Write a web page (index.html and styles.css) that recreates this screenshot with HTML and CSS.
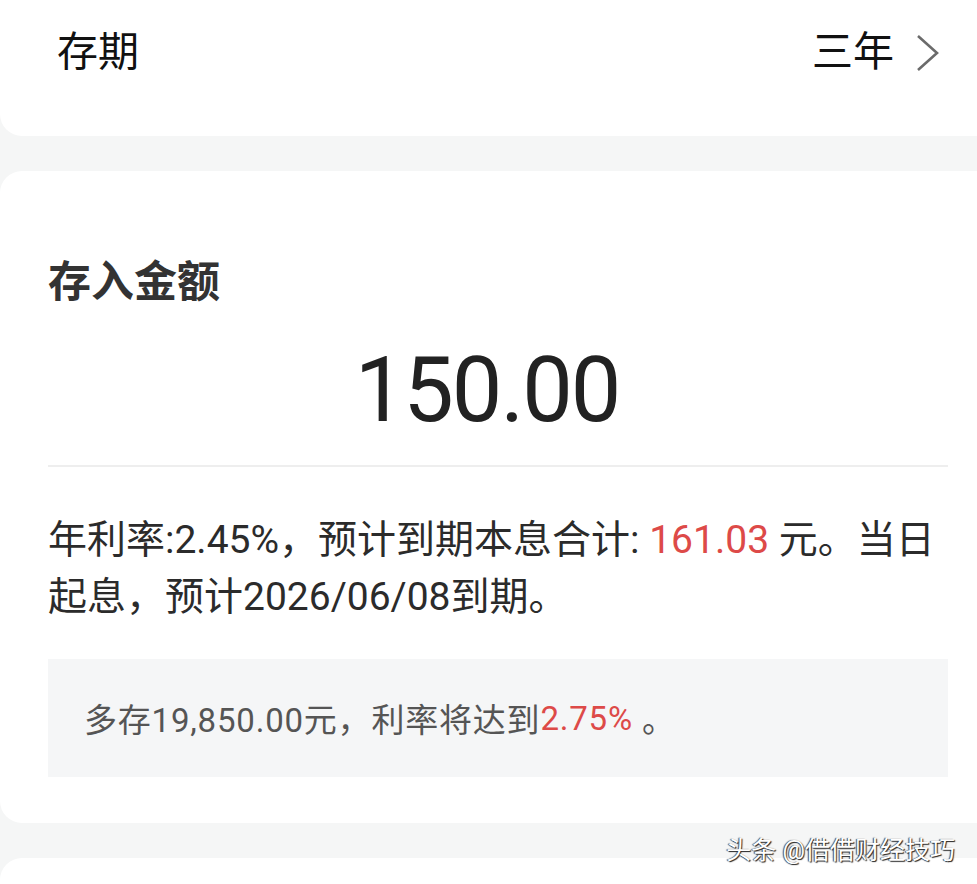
FILE: index.html
```html
<!DOCTYPE html>
<html lang="zh-CN">
<head>
  <meta charset="UTF-8" />
  <meta name="viewport" content="width=device-width, initial-scale=1.0" />
  <title>存款</title>
  <link rel="stylesheet" href="styles.css">
</head>
<body>
  <div class="card term">
    <span class="term-label">存期</span>
    <span class="term-value">三年
      <svg class="chevron" width="24" height="38" viewBox="0 0 24 38"><path d="M2 2 L21 19 L2 36" fill="none" stroke="#6b6b6b" stroke-width="2.6"/></svg>
    </span>
  </div>

  <div class="card amount">
    <h3 class="amount-title">存入金额</h3>
    <div class="amount-value">150.00</div>
    <div class="divider"></div>
    <p class="summary">年利率:2.45%，预计到期本息合计: <span class="red">161.03</span> 元。当日起息，预计2026/06/08到期。</p>
    <div class="tip">多存19,850.00元，利率将达到<span class="red">2.75%</span>&nbsp;。</div>
  </div>

  <div class="card next"></div>

  <div class="watermark">头条 @借借财经技巧</div>
</body>
</html>
```

FILE: styles.css
```css
body {
  margin: 0;
  background: #f5f6f6;
  font-family: Roboto, "Noto Sans CJK SC", sans-serif;
  color: #333;
  overflow: hidden;
  height: 884px;
  position: relative;
}
.card {
  background: #fff;
  border-radius: 22px 0 0 22px;
}
.term {
  height: 136px;
  box-sizing: border-box;
  padding: 22px 37px 0 57px;
  display: flex;
  justify-content: space-between;
  align-items: flex-start;
  border-radius: 0 0 0 22px;
  color: #111;
  font-size: 41px;
  line-height: 60px;
}
.term-value {
  display: flex;
  align-items: center;
  gap: 22px;
}
.chevron {
  margin-top: 2px;
}
.amount {
  margin-top: 35px;
  padding: 81px 29px 46px 48px;
}
.amount-title {
  margin: 0;
  font-size: 43px;
  line-height: 60px;
  font-weight: bold;
  color: #333;
}
.amount-value {
  margin-top: 29px;
  text-align: center;
  font-size: 90px;
  line-height: 100px;
  color: #222;
  letter-spacing: -2px;
  padding-right: 22px;
}
.divider {
  margin-top: 24px;
  height: 2px;
  background: #eeeeee;
}
.summary {
  margin: 45px 0 0;
  font-size: 39px;
  line-height: 57px;
  color: #2b2b2b;
}
.red {
  color: #dd4a48;
}
.tip {
  margin-top: 33px;
  height: 118px;
  box-sizing: border-box;
  padding-left: 36px;
  display: flex;
  align-items: center;
  background: #f5f6f7;
  font-size: 33px;
  letter-spacing: 0.8px;
  color: #555;
}
.next {
  margin-top: 35px;
  height: 26px;
  border-radius: 22px 0 0 0;
}
.watermark {
  position: absolute;
  right: 22px;
  top: 830px;
  font-size: 25px;
  color: #fff;
  text-shadow: 1px 1px 1px #222, -1px 0 1px #444;
}
```
